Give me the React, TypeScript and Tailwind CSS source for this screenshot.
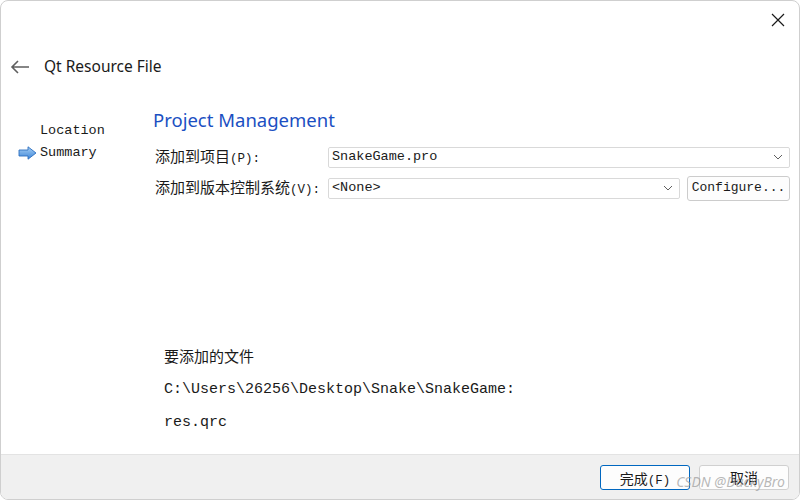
import React from 'react';

const mono = { fontFamily: '"Liberation Mono", "Noto Sans CJK SC", monospace' };
const cjk = { fontFamily: '"Noto Sans CJK SC", "Noto Sans", sans-serif' };
const ui = { fontFamily: '"Noto Sans", "Noto Sans CJK SC", sans-serif' };

const Chevron = () => (
  <svg width="10" height="6" viewBox="0 0 10 6" className="shrink-0">
    <path d="M1 1 L5 5 L9 1" fill="none" stroke="#606060" strokeWidth="1" />
  </svg>
);

const Label = ({ zh, key_ }: { zh: string; key_: string }) => (
  <div className="flex items-baseline text-[15px] leading-none text-[#1a1a1a] whitespace-nowrap">
    <span style={cjk}>{zh}</span>
    <span style={mono} className="text-[12.5px]">
      {key_}
    </span>
  </div>
);

const Combo = ({ value, className }: { value: string; className: string }) => (
  <div
    className={`h-[21px] flex items-center justify-between pl-[3px] pr-[6px] border border-[#d9d9d9] rounded-[2px] bg-white ${className}`}
  >
    <span style={mono} className="text-[13.5px] text-[#1a1a1a] leading-none">
      {value}
    </span>
    <Chevron />
  </div>
);

const App = () => {
  return (
    <div className="w-[800px] h-[500px] bg-white overflow-hidden">
      <div className="relative w-full h-full flex flex-col border border-[#cfcfcf] rounded-[8px] overflow-hidden bg-white">
        {/* top bar */}
        <div className="h-[38px] flex justify-end items-center pr-[14px]">
          <svg width="14" height="14" viewBox="0 0 14 14">
            <path d="M1 1 L13 13 M13 1 L1 13" stroke="#1a1a1a" strokeWidth="1.2" />
          </svg>
        </div>

        {/* header */}
        <div className="h-[58px] flex items-center pl-[9px]">
          <svg width="20" height="16" viewBox="0 0 20 16" className="mt-[-3px]">
            <path d="M19 8 H2 M8 2 L2 8 L8 14" fill="none" stroke="#5f5f5f" strokeWidth="1.6" />
          </svg>
          <span style={ui} className="ml-[14px] mt-[-3px] text-[15.5px] text-[#1a1a1a]">
            Qt Resource File
          </span>
        </div>

        {/* body */}
        <div className="flex-1 flex">
          <div className="w-[152px] shrink-0 pt-[23px]">
            <div style={mono} className="pl-[39px] text-[13.5px] leading-[22px] text-[#1a1a1a]">
              Location
            </div>
            <div className="flex items-center pl-[17px]">
              <svg width="19" height="14" viewBox="0 0 19 14" className="mr-[3px]">
                <defs>
                  <linearGradient id="ar" x1="0" y1="0" x2="0" y2="1">
                    <stop offset="0" stopColor="#a8d0f5" />
                    <stop offset="1" stopColor="#3d86d8" />
                  </linearGradient>
                </defs>
                <path
                  d="M1 4 H10 V0.8 L18 7 L10 13.2 V10 H1 Z"
                  fill="url(#ar)"
                  stroke="#2e6fc0"
                  strokeWidth="0.9"
                />
              </svg>
              <span style={mono} className="text-[13.5px] leading-[22px] text-[#1a1a1a]">
                Summary
              </span>
            </div>
          </div>

          <div className="flex-1 pr-[9px] flex flex-col">
            <div style={ui} className="text-[18.5px] leading-none text-[#1b4fc2] mt-[14px]">
              Project Management
            </div>

            <div className="mt-[17px] flex items-center ml-[2px]">
              <div className="w-[173px]">
                <Label zh="添加到项目" key_="(P):" />
              </div>
              <Combo value="SnakeGame.pro" className="flex-1" />
            </div>

            <div className="mt-[8px] flex items-center ml-[2px]">
              <div className="w-[173px]">
                <Label zh="添加到版本控制系统" key_="(V):" />
              </div>
              <Combo value="<None>" className="w-[352px]" />
              <div
                style={mono}
                className="ml-[7px] flex-1 h-[25px] flex items-center justify-center border border-[#cccccc] rounded-[3px] bg-[#fdfdfd] text-[13px] text-[#1a1a1a]"
              >
                Configure...
              </div>
            </div>

            <div className="flex-1" />

            <div className="pl-[11px] pb-[24px]">
              <div style={cjk} className="text-[15px] leading-none text-[#1a1a1a]">
                要添加的文件
              </div>
              <div style={mono} className="mt-[19px] text-[15px] leading-none text-[#1a1a1a]">
                C:\Users\26256\Desktop\Snake\SnakeGame:
              </div>
              <div style={mono} className="mt-[18px] text-[15px] leading-none text-[#1a1a1a]">
                res.qrc
              </div>
            </div>
          </div>
        </div>

        {/* footer */}
        <div className="h-[45px] shrink-0 border-t border-[#e3e3e3] bg-[#f0f0f0] flex items-center justify-end gap-[9px] pr-[10px] pt-[1px]">
          <div
            style={cjk}
            className="w-[90px] h-[25px] flex items-baseline justify-center pt-[2px] rounded-[3px] border border-[#0067c0] bg-[#fdfdfd] text-[14px] text-[#1a1a1a]"
          >
            完成<span style={mono} className="text-[12.5px]">(F)</span>
          </div>
          <div
            style={cjk}
            className="w-[90px] h-[25px] flex items-center justify-center rounded-[3px] border border-[#d0d0d0] bg-[#fdfdfd] text-[14px] text-[#1a1a1a]"
          >
            取消
          </div>
        </div>

        <div
          style={ui}
          className="absolute right-[14px] bottom-[7px] text-[14px] text-[#9a9a9a]/70 italic pointer-events-none"
        >
          CSDN @DuckyBro
        </div>
      </div>
    </div>
  );
};

export default App;
